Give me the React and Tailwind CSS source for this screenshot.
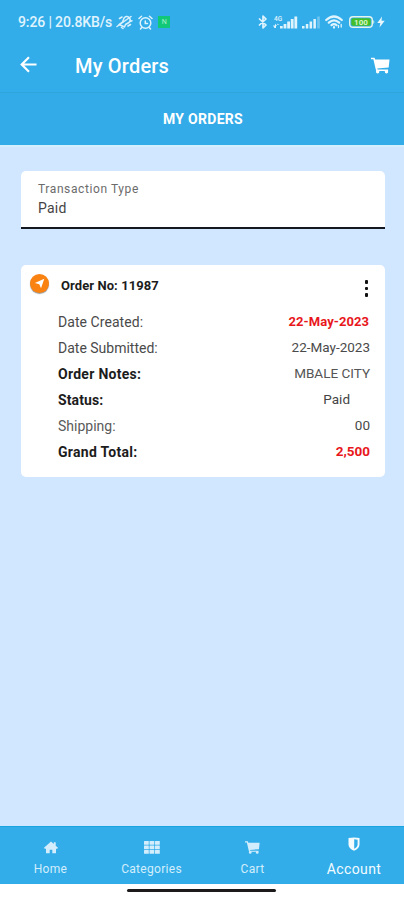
import React from 'react';

const BackArrow = () => (
  <svg className="w-[23px] h-[23px] -mt-[3px]" viewBox="0 0 23 23" fill="none" stroke="currentColor" strokeWidth="2.200">
    <path d="M19.500 11.500H5M12 4.200 4.700 11.500 12 18.800" />
  </svg>
);

const Cart = ({ className }) => (
  <svg className={className} viewBox="0 0 20 17" fill="currentColor">
    <path d="M0 .3h3.700l.8 1.900H19.500L18.600 10.700 6.500 11.700l.5 1.100h11v1.400H5.500L4.700 11.500 2.500 1.900H0z" />
    <circle cx="7" cy="15" r="1.800" />
    <circle cx="16.300" cy="15" r="1.800" />
  </svg>
);

const MutedBell = () => (
  <svg className="w-[17px] h-4 ml-[4px]" viewBox="0 0 17 16" fill="none" stroke="#d9f1fd" strokeWidth="1.500" strokeLinecap="round" strokeLinejoin="round">
    <path d="M3 10.500 6.500 8 8 4.200C9 2.200 11.500 2 13 3.500s1.500 3.500 0 5L9.500 10.500 8.500 13Z" />
    <path d="M1 12.500 15 2.500M3.500 4.500 6 3M12 12l2.500-1.500M14 7.500l2-.8M5.500 13.500l1.500 1" />
  </svg>
);

const Alarm = () => (
  <svg className="w-[15px] h-[15px] ml-[5px]" viewBox="0 0 15 15" fill="none" stroke="#e0f4fe" strokeWidth="1.500" strokeLinecap="round">
    <circle cx="7.500" cy="8" r="5.300" />
    <path d="M1 3.500 3.500 1.300M14 3.500 11.500 1.300M7.300 6v2.500H9.500M3.500 12.800 2.500 14M11.500 12.800l1 1.200" />
  </svg>
);

const Bluetooth = () => (
  <svg className="w-[10px] h-[14px]" viewBox="0 0 10 14" fill="none" stroke="#e0f4fe" strokeWidth="1.700" strokeLinejoin="round" strokeLinecap="round">
    <path d="M1.500 4 8 10 5 12.800V1.200L8 4 1.500 10" />
  </svg>
);

const Signal = () => (
  <svg className="w-[25px] h-[14px] ml-[5px]" viewBox="0 0 25 14" fill="#e0f4fe">
    <text x="1" y="5.500" fontSize="6.500" fontFamily="Roboto, sans-serif" fontWeight="500">4G</text>
    <path d="M0 10.500h2V8.500l2 2.500H3v2H1.500zM4 8.500l2.500 1.500H4.500z" />
    <rect x="7" y="11" width="2.700" height="2.500" />
    <rect x="10.600" y="9" width="2.800" height="4.500" />
    <rect x="14.200" y="6.500" width="2.800" height="7" />
    <rect x="17.800" y="4" width="2.800" height="9.500" />
    <rect x="21.400" y="1.500" width="2.800" height="12" />
  </svg>
);

const SignalWeak = () => (
  <svg className="w-[18px] h-[14px] ml-[4px]" viewBox="0 0 18 14" fill="#e0f4fe">
    <rect x="0" y="11" width="2.500" height="2.500" />
    <rect x="3.800" y="9" width="2.500" height="4.500" />
    <rect x="7.600" y="6.500" width="2.500" height="7" />
    <rect x="11.400" y="4" width="2.500" height="9.500" />
    <rect x="15.200" y="1.500" width="2.600" height="12" opacity=".35" />
  </svg>
);

const Wifi = () => (
  <svg className="w-[19px] h-[14px] ml-[5px]" viewBox="0 0 19 14" fill="none" stroke="#e0f4fe" strokeWidth="2.200" strokeLinecap="round">
    <path d="M1.200 5Q9 -2 16.800 5M3.800 7.700Q9 3.200 14.200 7.700M6.500 10.200Q9 8.200 11.500 10.200" />
    <path d="M9 12.600v-.4" />
    <path d="M13.500 12.500V10.500M16.200 9.500v2.500" strokeWidth="1.300" />
  </svg>
);

const Battery = () => (
  <svg className="w-[26px] h-3 ml-[5px]" viewBox="0 0 26 12">
    <rect x=".7" y=".7" width="22.600" height="10.600" rx="3.300" fill="#32ade9" stroke="#e4f5ee" strokeWidth="1.400" />
    <rect x="2.300" y="2.300" width="19.400" height="7.400" rx="1.800" fill="#43bd28" />
    <path d="M24.300 4q2 2 0 4z" fill="#e4f5ee" />
    <text x="12" y="8.900" textAnchor="middle" fontSize="8" fontWeight="700" fill="#d8f7c8" fontFamily="Roboto, sans-serif">100</text>
  </svg>
);

const Bolt = () => (
  <svg className="w-[8px] h-[12px] ml-[2px]" viewBox="0 0 8 12" fill="#e9f7fe">
    <path d="M5 .5 .3 7H3.300L2.500 11.500 7.700 4.800H4.500z" />
  </svg>
);

const Home = () => (
  <svg className="w-[14px] h-[13px]" viewBox="0 0 14 13" fill="currentColor">
    <path d="M7 .5 9.800 3V1.200h1.900v3.500L14 6.800l-.7 1H12V12.300H8.300V8.800H5.700v3.500H2V7.800H.7L0 6.800z" />
  </svg>
);

const Grid = () => (
  <svg className="w-4 h-[13px]" viewBox="0 0 16 13" fill="currentColor">
    {[0, 4.5, 9].map((y) => [0, 5.5, 11].map((x) => (
      <rect key={`${x}-${y}`} x={x} y={y} width="4.800" height="3.800" rx=".5" />
    )))}
  </svg>
);

const Shield = () => (
  <svg className="w-[12px] h-[14px]" viewBox="0 0 12 14">
    <path d="M.5 1Q6 -.2 11.500 1V7.500C11.500 10.500 9 12.500 6 13.800 3 12.500 .5 10.500 .5 7.500z" fill="#f4fbff" />
    <path d="M6.200 2.300 9.600 2.700V7.500c0 2-1.500 3.200-3.400 4.300z" fill="#32ade9" />
  </svg>
);

const rows = [
  { label: 'Date Created:', value: '22-May-2023', labelStyle: 'text-[#4a4a4a] tracking-[0.06px]', valueStyle: 'text-[13px] font-bold text-[#e8171c] pr-px tracking-[0.06px]' },
  { label: 'Date Submitted:', value: '22-May-2023', labelStyle: 'text-[#4a4a4a]', valueStyle: 'text-[#4a4a4a]' },
  { label: 'Order Notes:', value: 'MBALE CITY', labelStyle: 'font-bold text-[#1c1c1c] tracking-[0.28px]', valueStyle: 'text-[#555]' },
  { label: 'Status:', value: 'Paid', labelStyle: 'font-bold text-[#1c1c1c] tracking-[0.1px]', valueStyle: 'text-[#444] pr-5' },
  { label: 'Shipping:', value: '00', labelStyle: 'text-[#5a5a5a]', valueStyle: 'text-[#4a4a4a]' },
  { label: 'Grand Total:', value: '2,500', labelStyle: 'font-bold text-[#1c1c1c] tracking-[0.28px]', valueStyle: 'font-bold text-[#e8171c]' }
];

const tabs = [
  { label: 'Home', icon: <Home /> },
  { label: 'Categories', icon: <Grid /> },
  { label: 'Cart', icon: <Cart className="w-[15px] h-[13px]" /> },
  { label: 'Account', icon: <Shield />, active: true }
];

const App = () => {
  return (
    <div className="w-[404px] h-[900px] flex flex-col overflow-hidden bg-[#d1e6ff] font-['Roboto',sans-serif]">
      {/* Status bar */}
      <div className="h-11 shrink-0 bg-[#32ade9] text-[#e0f4fe] flex items-center pl-[18px] pr-[19px]">
        <span className="text-[14px] font-medium whitespace-nowrap tracking-[-0.13px]">9:26 | 20.8KB/s</span>
        <MutedBell />
        <Alarm />
        <span className="w-[12px] h-[12px] ml-[5px] bg-[#10c878] text-[#a9f0c9] text-[7px] leading-[12px] text-center">N</span>
        <div className="ml-auto flex items-center">
          <Bluetooth />
          <Signal />
          <SignalWeak />
          <Wifi />
          <Battery />
          <Bolt />
        </div>
      </div>

      {/* Toolbar */}
      <div className="h-12 shrink-0 bg-[#32ade9] text-white flex items-center pl-[17px] pr-[14px] pb-[5px]">
        <BackArrow />
        <h1 className="ml-[35px] text-[20px] font-medium tracking-[0.2px]">My Orders</h1>
        <Cart className="w-[19px] h-[17px] ml-auto -mt-px" />
      </div>

      <div className="h-[53px] shrink-0 bg-[#33abe8] border-t border-[#2fa5dc] text-white flex items-center justify-center pl-[2px] pt-px">
        <h2 className="text-[14px] font-bold tracking-[0.3px]">MY ORDERS</h2>
      </div>

      <div className="flex-1 border-t-2 border-[#d3effd] pl-[21px] pt-[24px] pr-[19px]">
        {/* Transaction type */}
        <div className="h-[58px] bg-white rounded-t-[5px] border-b-2 border-[#14171f] pl-[17px] pt-[10px]">
          <p className="text-[12px] leading-4 text-[#6b6b6b] tracking-[0.6px]">Transaction Type</p>
          <p className="text-[14px] leading-[22px] text-[#444] tracking-[0.2px]">Paid</p>
        </div>

        {/* Order card */}
        <div className="mt-9 h-[212px] bg-white rounded-[5px] pt-[9px]">
          <div className="flex items-start pl-[9px] pr-[17px] h-[35px]">
            <span className="w-[19px] h-[19px] rounded-full bg-[#f98210] shadow-[0_1px_1px_#999] flex items-center justify-center">
              <svg className="w-[11px] h-[11px]" viewBox="0 0 11 11" fill="#fff">
                <path d="M10.300 .8 7 10.200 5.300 6.200 .9 5z" />
              </svg>
            </span>
            <span className="ml-3 mt-[3px] text-[13px] leading-[18px] font-bold text-[#1c1c1c] tracking-[0.08px]">Order No: 11987</span>
            <span className="ml-auto mt-[6px] flex flex-col gap-[3px]">
              <i className="w-[3.500px] h-[3.500px] rounded-[1px] bg-[#111]"></i>
              <i className="w-[3.500px] h-[3.500px] rounded-[1px] bg-[#111]"></i>
              <i className="w-[3.500px] h-[3.500px] rounded-[1px] bg-[#111]"></i>
            </span>
          </div>
          <div className="pl-[37px] pr-[15px]">
            {rows.map((row, index) => (
              <div key={index} className="h-[26px] flex items-center justify-between text-[14px]">
                <span className={row.labelStyle}>{row.label}</span>
                <span className="text-[13.5px] leading-5 -mt-[2px]"><span className={row.valueStyle}>{row.value}</span></span>
              </div>
            ))}
          </div>
        </div>
      </div>

      {/* Bottom navigation */}
      <div className="h-[58px] shrink-0 bg-[#32ade9] border-t border-[#1ba5df] grid grid-cols-4">
        {tabs.map((tab) => (
          <div key={tab.label} className={tab.active ? 'flex flex-col items-center pt-[9px] pl-px text-[#f4fbff]' : 'flex flex-col items-center pt-[12px] text-[#d3edfc]'}>
            <div className="h-4 flex items-center">{tab.icon}</div>
            <span className={tab.active ? 'mt-[6px] text-[14px] leading-[22px] tracking-[0.4px]' : 'mt-[5px] text-[12px] leading-[18px] tracking-[0.3px]'}>{tab.label}</span>
          </div>
        ))}
      </div>
      <div className="h-4 shrink-0 bg-white flex justify-center pt-[5px] pr-px">
        <div className="w-[149px] h-[3px] rounded-full bg-[#1c1a1a]"></div>
      </div>
    </div>
  );
};

export default App;
